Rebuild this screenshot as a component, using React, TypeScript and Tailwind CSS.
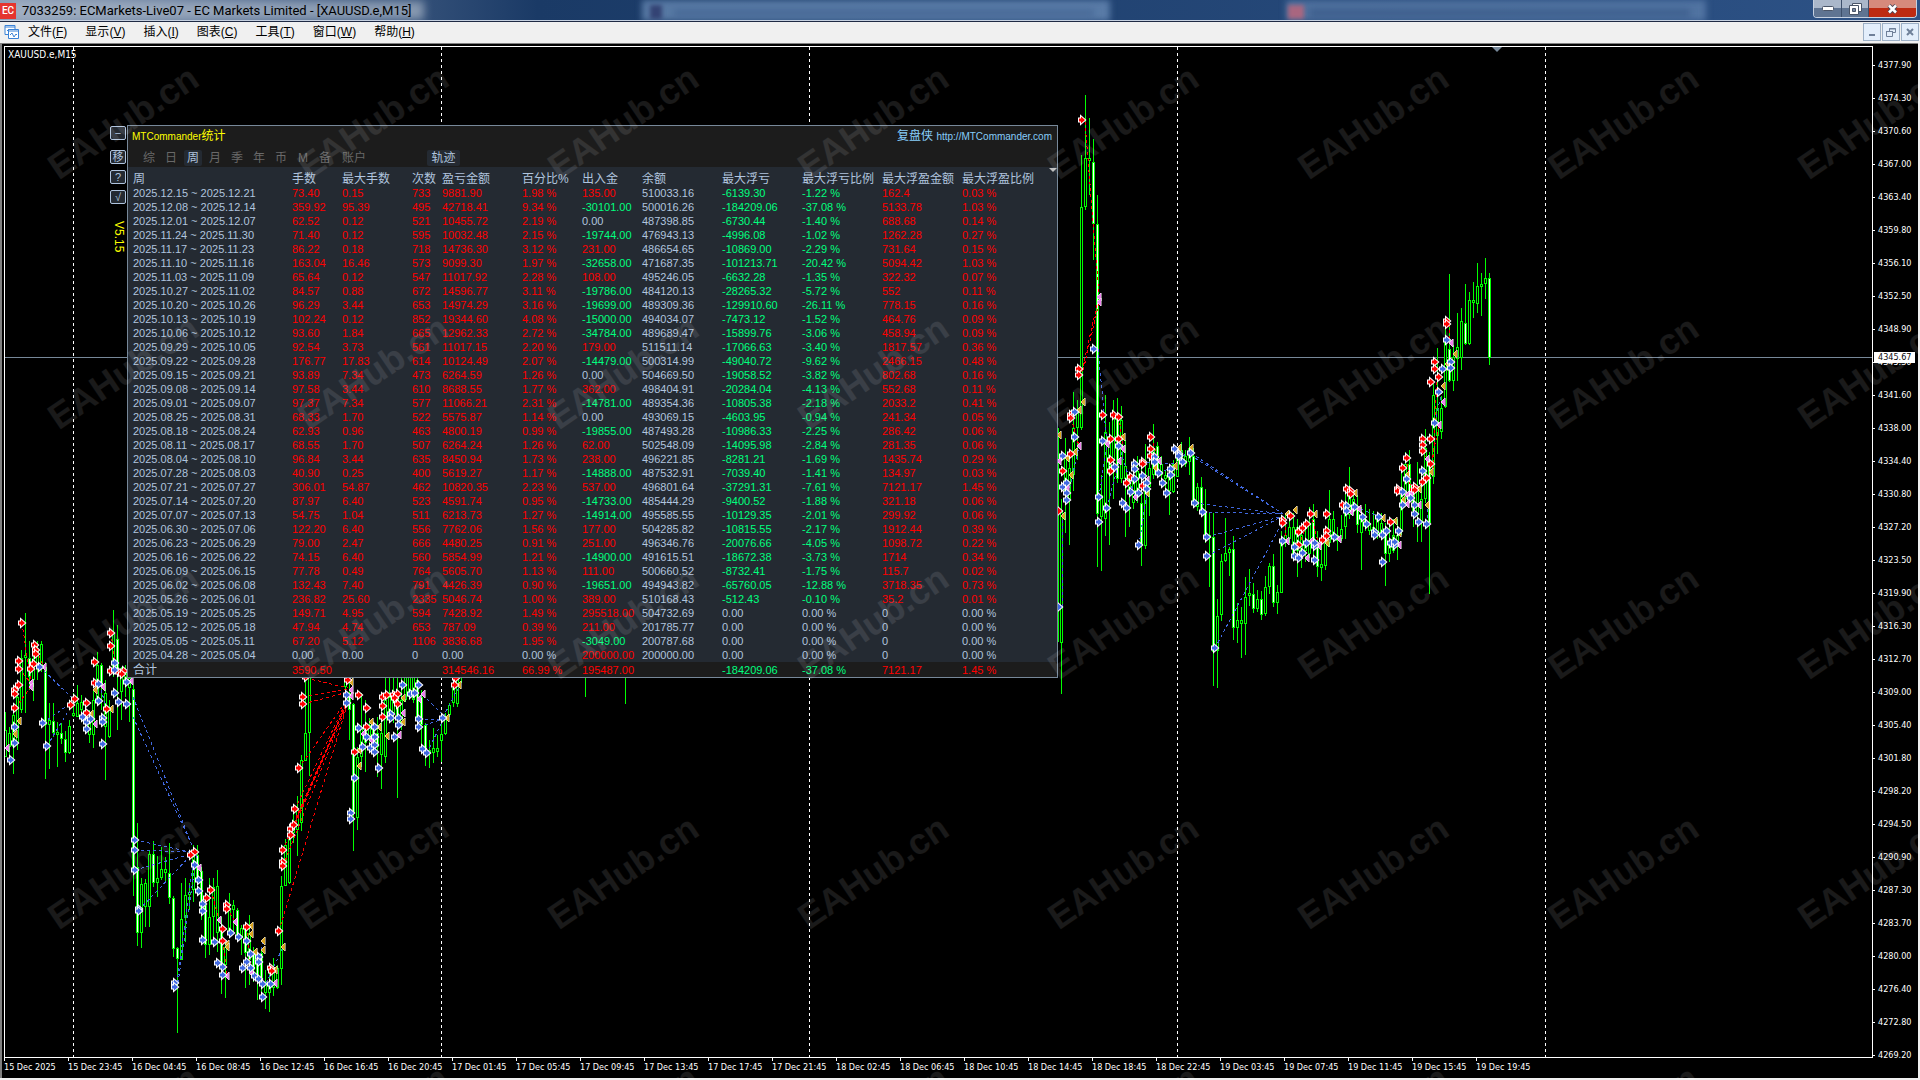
import { useState } from "react";
import clsx from "clsx";

// bar: [high, bodyTop, bodyBottom, low, 1 when the close is below the open]
type Bar = number[];
type Point = [number, number];
type MarkerKind = "buy" | "sell" | "closeBuy" | "closeSell";

interface Session {
  originX: number;
  originY: number;
  scaleY: number;
  firstBar: number;
  bars: Bar[];
  markers: Record<MarkerKind, Point[]>;
  buyTrails: number[][];
  sellTrails: number[][];
}

const BAR_STEP = 4;

const early: Session = {
  originX: 0,
  originY: 600,
  scaleY: 3,
  firstBar: 5,
  bars: [
    [335, 390, 470, 470], [380, 400, 440, 470], [340, 345, 440, 523], [250, 290, 430, 450], [150, 175, 330, 340],
    [40, 165, 175, 340], [123, 175, 230, 270, 1], [130, 180, 240, 302], [123, 150, 200, 240], [123, 133, 205, 215],
    [185, 200, 375, 537, 1], [308, 360, 375, 507], [309, 362, 398, 410, 1], [365, 397, 400, 500], [370, 400, 417, 432, 1],
    [393, 418, 460, 486, 1], [360, 378, 460, 461], [280, 340, 348, 350], [255, 310, 350, 352], [285, 305, 330, 345],
    [300, 330, 370, 400], [330, 350, 405, 430], [270, 300, 405, 443], [155, 195, 300, 310], [190, 196, 260, 330, 1],
    [240, 280, 380, 540], [300, 330, 410, 415], [30, 100, 200, 230], [75, 118, 215, 390, 1], [200, 220, 275, 360],
    [195, 210, 240, 290], [215, 235, 265, 365], [255, 268, 810, 888, 1], [668, 800, 1000, 1038, 1], [835, 852, 1000, 1043],
    [838, 848, 920, 980], [750, 762, 920, 980], [722, 762, 850, 860, 1], [767, 835, 850, 890], [740, 808, 835, 840],
    [770, 808, 818, 850], [728, 818, 895, 912, 1], [887, 895, 1048, 1070, 1], [1040, 1045, 1078, 1299, 1], [850, 958, 1080, 1080],
    [835, 885, 955, 1025], [850, 875, 885, 930], [735, 765, 870, 905], [735, 765, 840, 880, 1], [800, 812, 940, 960, 1],
    [900, 915, 1035, 1075, 1], [835, 950, 1035, 1065], [835, 860, 950, 1010], [810, 858, 1000, 1055], [950, 980, 1095, 1183, 1],
    [1020, 1040, 1095, 1193], [880, 930, 1000, 1010], [900, 915, 930, 1000], [925, 930, 1010, 1020, 1], [975, 985, 1015, 1065],
    [970, 985, 1060, 1165, 1], [945, 1000, 1080, 1155], [1040, 1060, 1110, 1145, 1], [1060, 1080, 1125, 1200, 1], [1040, 1060, 1140, 1200, 1],
    [1110, 1150, 1178, 1227], [1120, 1150, 1178, 1236], [1075, 1100, 1165, 1187], [1095, 1105, 1165, 1168], [827, 857, 1108, 1155],
    [717, 735, 857, 857], [680, 700, 850, 853], [640, 665, 700, 730], [587, 630, 690, 768], [465, 480, 670, 692],
    [200, 400, 483, 483], [150, 200, 400, 527], [100, 120, 200, 220], [60, 80, 150, 200], [60, 90, 140, 200],
    [60, 90, 140, 200], [60, 90, 140, 200], [60, 90, 140, 200], [60, 90, 140, 200], [60, 90, 140, 210],
    [180, 200, 260, 270], [240, 280, 330, 420, 1], [310, 312, 640, 752, 1], [440, 470, 655, 690], [280, 380, 470, 500],
    [300, 385, 430, 515], [355, 375, 410, 460], [370, 385, 430, 470], [350, 400, 440, 530, 1], [330, 400, 465, 567],
    [200, 300, 470, 488], [200, 290, 350, 360], [180, 280, 340, 370], [180, 290, 360, 595, 1], [200, 300, 370, 390],
    [180, 232, 300, 305], [180, 200, 290, 300], [200, 232, 300, 310], [220, 240, 360, 360, 1], [270, 290, 375, 460, 1],
    [370, 375, 450, 497, 1], [420, 450, 462, 503], [385, 445, 458, 490], [405, 445, 457, 470], [370, 403, 422, 485],
    [340, 350, 403, 405], [310, 315, 345, 350], [260, 265, 310, 320], [180, 225, 312, 320], [150, 170, 225, 250],
  ],
  markers: {
    buy: [
      [45, 382], [45, 430], [33, 481], [120, 202], [129, 370], [141, 438], [248, 352], [260, 365], [272, 358], [260, 388],
      [296, 303], [298, 253], [308, 355], [308, 365], [308, 433], [344, 188], [344, 211], [344, 280], [356, 305], [380, 246],
      [380, 313], [404, 720], [404, 751], [404, 811], [416, 928], [418, 934], [524, 1150], [526, 1160], [585, 796], [597, 841],
      [597, 873], [608, 913], [608, 933], [608, 1021], [645, 1027], [693, 999], [717, 1012], [741, 1022], [655, 1089], [669, 1102],
      [669, 1126], [729, 1105], [740, 1085], [752, 1105], [752, 1063], [777, 1070], [777, 1087], [765, 1128], [777, 1138],
      [789, 1153], [813, 1153], [789, 1192], [1042, 286], [1042, 310], [1053, 640], [1053, 657], [1065, 535], [1077, 383],
      [1125, 380], [1101, 411], [1125, 411], [1089, 440], [1113, 444], [1125, 434], [1125, 455], [1137, 505], [1173, 342],
      [1173, 355], [1197, 355], [1197, 374], [1185, 410], [1209, 256], [1233, 282], [1245, 280], [1257, 256], [1257, 357],
      [1257, 380], [1268, 448], [1280, 460], [1328, 355],
    ],
    sell: [
      [67, 70], [105, 135], [107, 150], [109, 163], [56, 184], [56, 208], [103, 192], [92, 208], [56, 256], [45, 270],
      [45, 282], [45, 325], [285, 187], [285, 248], [332, 98], [334, 138], [332, 212], [358, 216], [372, 212], [366, 222],
      [225, 296], [213, 315], [260, 310], [260, 340], [320, 327], [908, 290], [908, 313], [918, 232], [1045, 240], [896, 505],
      [884, 628], [872, 686], [882, 674], [872, 704], [848, 751], [848, 787], [848, 797], [836, 994], [585, 757], [573, 766],
      [633, 871], [621, 895], [681, 915], [681, 928], [669, 987], [669, 1023], [741, 981], [813, 1104], [815, 1112],
      [1076, 286], [1101, 325], [1065, 457], [1101, 381], [1149, 292], [1160, 284], [1183, 284], [1195, 282], [1185, 294],
      [1149, 319], [1195, 313], [1149, 351], [1367, 235], [1365, 256],
    ],
    closeBuy: [
      [57, 362], [45, 403], [285, 271], [272, 342], [333, 326], [680, 1032], [680, 1042], [753, 978], [753, 1003], [765, 1057],
      [789, 1023], [789, 1050], [825, 1110], [850, 1040], [1052, 247], [1077, 498], [1077, 450], [1113, 365], [1137, 380],
      [1160, 408], [1209, 294], [1209, 365], [1342, 355], [1378, 256],
    ],
    closeSell: [
      [93, 250], [93, 262], [22, 445], [131, 201], [309, 262], [285, 373], [394, 243], [597, 804], [657, 959], [706, 967],
      [682, 1127], [753, 1118], [825, 1150], [1052, 270], [1052, 288], [1089, 403], [1113, 420], [1209, 340], [1197, 404],
      [1268, 282], [1257, 298],
    ],
  },
  buyTrails: [
    [120, 202, 213, 290], [129, 370, 213, 310], [141, 438, 225, 300], [400, 290, 580, 745], [400, 350, 585, 757],
    [404, 720, 573, 757], [404, 751, 573, 757], [404, 811, 573, 762], [418, 930, 573, 766], [530, 1150, 580, 790],
    [535, 1150, 590, 757], [1268, 285, 1328, 345], [1257, 357, 1328, 357], [1257, 380, 1328, 357], [1280, 460, 1328, 360],
    [797, 1150, 850, 1040], [1330, 350, 1380, 256], [777, 1087, 789, 1023], [298, 253, 320, 327],
  ],
  sellTrails: [
    [908, 290, 1045, 268], [918, 235, 1045, 265], [908, 313, 1045, 275], [896, 505, 1040, 300], [884, 628, 1040, 300],
    [872, 686, 1040, 305], [882, 674, 1040, 305], [872, 704, 1040, 310], [848, 751, 1040, 310], [848, 797, 1040, 315],
    [836, 994, 1045, 305], [45, 325, 93, 262], [67, 70, 92, 250], [681, 925, 706, 967], [633, 871, 657, 959],
    [669, 1023, 682, 1126], [56, 208, 93, 250], [107, 150, 131, 200], [332, 98, 345, 188], [741, 981, 753, 1118],
  ],
};

const late: Session = {
  originX: 1040,
  originY: 80,
  scaleY: 2.529,
  firstBar: 1057,
  bars: [
    [870, 880, 1422, 1422], [1060, 1090, 1425, 1552], [905, 950, 1050, 1145], [950, 980, 1060, 1175], [790, 880, 1000, 1040],
    [810, 840, 880, 960], [190, 320, 880, 885], [38, 198, 322, 328], [96, 198, 206, 290], [148, 208, 365, 455, 1],
    [290, 365, 1097, 1232, 1], [1000, 1050, 1105, 1242], [797, 890, 1110, 1152], [865, 900, 1000, 1175], [810, 850, 960, 1060],
    [803, 850, 1010, 1020, 1], [825, 860, 1010, 1020], [910, 975, 1010, 1157], [1000, 1010, 1040, 1130], [960, 1000, 1070, 1085],
    [950, 990, 1050, 1070], [960, 1070, 1175, 1228, 1], [920, 1030, 1178, 1185], [930, 980, 1030, 1103], [870, 930, 1000, 1010],
    [915, 925, 985, 1000, 1], [950, 970, 1000, 1010], [990, 1000, 1010, 1040], [980, 1000, 1040, 1100], [960, 970, 1042, 1045],
    [930, 950, 1003, 1005], [915, 935, 965, 980], [935, 950, 970, 978], [903, 930, 965, 1000], [930, 950, 1070, 1080, 1],
    [1018, 1030, 1080, 1090], [1004, 1030, 1095, 1100, 1], [1035, 1090, 1155, 1170, 1], [1095, 1150, 1158, 1282], [1095, 1155, 1447, 1532, 1],
    [1313, 1355, 1445, 1537], [1200, 1217, 1353, 1368], [1108, 1195, 1217, 1218], [1180, 1187, 1195, 1255], [1153, 1187, 1387, 1415, 1],
    [1323, 1365, 1387, 1423], [1333, 1365, 1377, 1463], [1257, 1308, 1375, 1453], [1237, 1298, 1303, 1330], [1272, 1300, 1337, 1347, 1],
    [1290, 1313, 1337, 1345], [1293, 1313, 1352, 1365, 1], [1255, 1282, 1350, 1355], [1222, 1230, 1283, 1300], [1200, 1230, 1322, 1333, 1],
    [1277, 1295, 1323, 1350], [1140, 1165, 1297, 1297], [1100, 1150, 1170, 1180], [1110, 1130, 1160, 1170], [1095, 1130, 1200, 1210],
    [1110, 1130, 1190, 1257], [1120, 1150, 1200, 1235], [1115, 1170, 1190, 1220], [1080, 1120, 1200, 1210], [1072, 1110, 1180, 1220, 1],
    [1140, 1170, 1232, 1257, 1], [1170, 1225, 1235, 1267], [1150, 1170, 1230, 1240], [1037, 1110, 1170, 1180], [1090, 1110, 1150, 1160],
    [1130, 1150, 1165, 1190], [1100, 1135, 1160, 1165], [1040, 1070, 1130, 1160], [978, 1050, 1100, 1110], [1040, 1060, 1085, 1100],
    [1050, 1080, 1125, 1145, 1], [1080, 1105, 1145, 1238], [1072, 1110, 1130, 1140], [1085, 1120, 1140, 1150], [1090, 1130, 1150, 1155],
    [1095, 1110, 1150, 1160], [1095, 1120, 1150, 1155], [1120, 1140, 1200, 1280, 1], [1120, 1170, 1200, 1220], [1110, 1150, 1190, 1195],
    [1110, 1150, 1180, 1215], [990, 1050, 1140, 1150], [940, 970, 1060, 1070], [935, 970, 1050, 1060, 1], [1020, 1040, 1090, 1130],
    [965, 1030, 1100, 1168], [1000, 1060, 1120, 1168], [883, 930, 1060, 1070], [940, 960, 1120, 1300, 1], [770, 797, 1005, 1022],
    [678, 830, 900, 945], [800, 830, 890, 907], [600, 660, 828, 830], [490, 680, 762, 765, 1], [670, 700, 760, 787],
    [590, 675, 705, 760], [577, 610, 703, 733], [517, 615, 668, 670, 1], [535, 557, 667, 670], [512, 557, 565, 603],
    [463, 522, 567, 590], [487, 517, 523, 597], [450, 502, 517, 555], [487, 502, 702, 722, 1],
  ],
  markers: {
    buy: [
      [163, 680], [104, 840], [104, 902], [68, 950], [70, 1030], [80, 1018], [80, 1045], [80, 1063], [58, 1333], [188, 912],
      [176, 1055], [176, 1117], [200, 1083], [236, 925], [224, 978], [248, 1070], [260, 1083], [272, 1042], [284, 972],
      [284, 985], [284, 1010], [296, 1045], [308, 1002], [320, 1018], [320, 1034], [296, 1175], [344, 953], [344, 967],
      [356, 993], [368, 1018], [380, 1045], [392, 983], [392, 1000], [404, 932], [416, 945], [416, 952], [428, 967],
      [452, 944], [464, 1071], [488, 1093], [500, 1156], [500, 1205], [524, 1436], [728, 1167], [764, 1182], [764, 1205],
      [776, 1210], [788, 1196], [800, 1171], [824, 1178], [824, 1213], [824, 1170], [884, 1155], [920, 1078], [920, 1090],
      [944, 1080], [968, 1106], [980, 1124], [1004, 1142], [1004, 1150], [1016, 1104], [1028, 1150], [1040, 1141],
      [1028, 1220], [1052, 1170], [1064, 1175], [1064, 1168], [1076, 1141], [1088, 1043], [1088, 1075], [1100, 1008],
      [1112, 1058], [1124, 1075], [1124, 1098], [1136, 1117], [1160, 1124], [1148, 990], [1184, 868], [1196, 790],
      [1208, 732], [1232, 714], [1232, 728], [1220, 657],
    ],
    sell: [
      [127, 100], [116, 732], [116, 746], [92, 848], [92, 855], [92, 946], [68, 988], [58, 1090], [188, 848], [223, 848],
      [236, 853], [212, 907], [236, 908], [212, 960], [212, 988], [260, 1020], [272, 1003], [308, 965], [308, 970],
      [308, 1027], [332, 904], [332, 932], [332, 950], [728, 1113], [728, 1120], [752, 1103], [776, 1143], [788, 1132],
      [800, 1124], [776, 1177], [814, 1098], [850, 1163], [860, 1140], [860, 1098], [860, 1153], [908, 1075], [920, 1035],
      [932, 1040], [932, 1048], [1052, 1118], [1075, 1035], [1075, 1040], [1088, 980], [1100, 957], [1124, 1030],
      [1124, 1038], [1148, 908], [1148, 922], [1148, 937], [1172, 908], [1172, 972], [1148, 1017], [1160, 1006],
      [1172, 765], [1184, 714], [1184, 732], [1196, 752], [1220, 610], [1220, 618],
    ],
    closeBuy: [
      [58, 897], [68, 1103], [82, 957], [93, 1000], [106, 940], [118, 835], [130, 815], [250, 902], [322, 1045], [344, 982],
      [406, 975], [418, 930], [454, 930], [766, 1088], [742, 1097], [826, 1097], [862, 1170], [946, 1045], [1030, 1107],
      [1066, 1115], [1078, 1145], [1088, 1062], [1102, 998], [1138, 1035], [1160, 1075], [1174, 992], [1210, 775],
      [1222, 717], [1245, 692],
    ],
    closeSell: [
      [58, 963], [118, 925], [80, 1032], [178, 550], [178, 562], [200, 920], [250, 932], [236, 963], [286, 1055],
      [356, 963], [320, 1012], [740, 1167], [800, 1208], [814, 1165], [838, 1178], [898, 1160], [932, 1093], [956, 1085],
      [1076, 1175], [1100, 1050], [1112, 1045], [1136, 1074], [1100, 1073], [1160, 958], [1198, 872], [1210, 815], [1234, 665],
    ],
  },
  buyTrails: [
    [452, 944, 728, 1098], [464, 955, 728, 1098], [464, 1071, 728, 1097], [488, 1093, 728, 1098], [500, 1156, 728, 1102],
    [500, 1205, 728, 1102], [524, 1436, 728, 1115], [173, 680, 200, 920], [176, 1055, 200, 920], [200, 1083, 236, 963],
    [236, 925, 286, 1055], [320, 967, 404, 970], [66, 1333, 66, 1100], [356, 993, 404, 975], [944, 1080, 1030, 1107],
    [80, 1063, 118, 925], [296, 1175, 322, 1045], [1160, 1124, 1160, 1075], [1184, 868, 1210, 775], [392, 983, 454, 930],
  ],
  sellTrails: [
    [136, 105, 176, 545], [176, 565, 130, 735], [172, 570, 122, 746], [1172, 972, 1198, 872], [1180, 985, 1190, 752],
    [1228, 618, 1228, 665], [236, 853, 250, 932], [92, 855, 118, 925], [1148, 937, 1160, 958], [212, 988, 236, 963],
    [736, 1115, 736, 1167], [814, 1098, 838, 1178], [332, 904, 356, 963], [1100, 957, 1112, 1045], [776, 1177, 800, 1124],
  ],
};

const separators = [73, 441, 809, 1177, 1545];

const prices = [
  "4377.90", "4374.30", "4370.60", "4367.00", "4363.40", "4359.80", "4356.10", "4352.50", "4348.90", "4345.30", "4341.60",
  "4338.00", "4334.40", "4330.80", "4327.20", "4323.50", "4319.90", "4316.30", "4312.70", "4309.00", "4305.40", "4301.80",
  "4298.20", "4294.50", "4290.90", "4287.30", "4283.70", "4280.00", "4276.40", "4272.80", "4269.20",
];

const times = [
  "15 Dec 2025", "15 Dec 23:45", "16 Dec 04:45", "16 Dec 08:45", "16 Dec 12:45", "16 Dec 16:45", "16 Dec 20:45", "17 Dec 01:45",
  "17 Dec 05:45", "17 Dec 09:45", "17 Dec 13:45", "17 Dec 17:45", "17 Dec 21:45", "18 Dec 02:45", "18 Dec 06:45", "18 Dec 10:45",
  "18 Dec 14:45", "18 Dec 18:45", "18 Dec 22:45", "19 Dec 03:45", "19 Dec 07:45", "19 Dec 11:45", "19 Dec 15:45", "19 Dec 19:45",
];

const menus = [
  ["文件", "F"], ["显示", "V"], ["插入", "I"], ["图表", "C"], ["工具", "T"], ["窗口", "W"], ["帮助", "H"],
];

const columns = [
  { name: "周", width: "w-[164px]" },
  { name: "手数", width: "w-[50px]" },
  { name: "最大手数", width: "w-[70px]" },
  { name: "次数", width: "w-[30px]" },
  { name: "盈亏金额", width: "w-[80px]" },
  { name: "百分比%", width: "w-[60px]" },
  { name: "出入金", width: "w-[60px]" },
  { name: "余额", width: "w-[80px]" },
  { name: "最大浮亏", width: "w-[80px]" },
  { name: "最大浮亏比例", width: "w-[80px]" },
  { name: "最大浮盈金额", width: "w-[80px]" },
  { name: "最大浮盈比例", width: "w-[95px]" },
];

// week | lots | max lots | count | profit | % | deposit | balance | max loss | loss % | max gain | gain %
const weeks = `2025.12.15 ~ 2025.12.21|73.40|0.15|733|9881.90|1.98 %|135.00|510033.16|-6139.30|-1.22 %|162.4|0.03 %
2025.12.08 ~ 2025.12.14|359.92|95.39|495|42718.41|9.34 %|-30101.00|500016.26|-184209.06|-37.08 %|5133.78|1.03 %
2025.12.01 ~ 2025.12.07|62.52|0.12|521|10455.72|2.19 %|0.00|487398.85|-6730.44|-1.40 %|688.68|0.14 %
2025.11.24 ~ 2025.11.30|71.40|0.12|595|10032.48|2.15 %|-19744.00|476943.13|-4996.08|-1.02 %|1262.28|0.27 %
2025.11.17 ~ 2025.11.23|86.22|0.18|718|14736.30|3.12 %|231.00|486654.65|-10869.00|-2.29 %|731.64|0.15 %
2025.11.10 ~ 2025.11.16|163.04|16.46|573|9099.30|1.97 %|-32658.00|471687.35|-101213.71|-20.42 %|5094.42|1.03 %
2025.11.03 ~ 2025.11.09|65.64|0.12|547|11017.92|2.28 %|108.00|495246.05|-6632.28|-1.35 %|322.32|0.07 %
2025.10.27 ~ 2025.11.02|84.57|0.88|672|14596.77|3.11 %|-19786.00|484120.13|-28265.32|-5.72 %|552|0.11 %
2025.10.20 ~ 2025.10.26|96.29|3.44|653|14974.29|3.16 %|-19699.00|489309.36|-129910.60|-26.11 %|778.15|0.16 %
2025.10.13 ~ 2025.10.19|102.24|0.12|852|19344.60|4.08 %|-15000.00|494034.07|-7473.12|-1.52 %|464.76|0.09 %
2025.10.06 ~ 2025.10.12|93.60|1.84|665|12962.33|2.72 %|-34784.00|489689.47|-15899.76|-3.06 %|458.94|0.09 %
2025.09.29 ~ 2025.10.05|92.54|3.73|561|11017.15|2.20 %|179.00|511511.14|-17066.63|-3.40 %|1817.57|0.36 %
2025.09.22 ~ 2025.09.28|176.77|17.83|614|10124.49|2.07 %|-14479.00|500314.99|-49040.72|-9.62 %|2466.15|0.48 %
2025.09.15 ~ 2025.09.21|93.89|7.34|473|6264.59|1.26 %|0.00|504669.50|-19058.52|-3.82 %|802.68|0.16 %
2025.09.08 ~ 2025.09.14|97.58|3.44|610|8688.55|1.77 %|362.00|498404.91|-20284.04|-4.13 %|552.68|0.11 %
2025.09.01 ~ 2025.09.07|97.37|7.34|577|11066.21|2.31 %|-14781.00|489354.36|-10805.38|-2.18 %|2033.2|0.41 %
2025.08.25 ~ 2025.08.31|68.33|1.70|522|5575.87|1.14 %|0.00|493069.15|-4603.95|-0.94 %|241.34|0.05 %
2025.08.18 ~ 2025.08.24|62.93|0.96|463|4800.19|0.99 %|-19855.00|487493.28|-10986.33|-2.25 %|286.42|0.06 %
2025.08.11 ~ 2025.08.17|68.55|1.70|507|6264.24|1.26 %|62.00|502548.09|-14095.98|-2.84 %|281.35|0.06 %
2025.08.04 ~ 2025.08.10|96.84|3.44|635|8450.94|1.73 %|238.00|496221.85|-8281.21|-1.69 %|1435.74|0.29 %
2025.07.28 ~ 2025.08.03|40.90|0.25|400|5619.27|1.17 %|-14888.00|487532.91|-7039.40|-1.41 %|134.97|0.03 %
2025.07.21 ~ 2025.07.27|306.01|54.87|462|10820.35|2.23 %|537.00|496801.64|-37291.31|-7.61 %|7121.17|1.45 %
2025.07.14 ~ 2025.07.20|87.97|6.40|523|4591.74|0.95 %|-14733.00|485444.29|-9400.52|-1.88 %|321.18|0.06 %
2025.07.07 ~ 2025.07.13|54.75|1.04|511|6213.73|1.27 %|-14914.00|495585.55|-10129.35|-2.01 %|299.92|0.06 %
2025.06.30 ~ 2025.07.06|122.20|6.40|556|7762.06|1.56 %|177.00|504285.82|-10815.55|-2.17 %|1912.44|0.39 %
2025.06.23 ~ 2025.06.29|79.00|2.47|666|4480.25|0.91 %|251.00|496346.76|-20076.66|-4.05 %|1098.72|0.22 %
2025.06.16 ~ 2025.06.22|74.15|6.40|560|5854.99|1.21 %|-14900.00|491615.51|-18672.38|-3.73 %|1714|0.34 %
2025.06.09 ~ 2025.06.15|77.78|0.49|764|5605.70|1.13 %|111.00|500660.52|-8732.41|-1.75 %|115.7|0.02 %
2025.06.02 ~ 2025.06.08|132.43|7.40|791|4426.39|0.90 %|-19651.00|494943.82|-65760.05|-12.88 %|3718.35|0.73 %
2025.05.26 ~ 2025.06.01|236.82|25.60|2335|5046.74|1.00 %|389.00|510168.43|-512.43|-0.10 %|35.2|0.01 %
2025.05.19 ~ 2025.05.25|149.71|4.95|594|7428.92|1.49 %|295518.00|504732.69|0.00|0.00 %|0|0.00 %
2025.05.12 ~ 2025.05.18|47.94|4.74|653|787.09|0.39 %|211.00|201785.77|0.00|0.00 %|0|0.00 %
2025.05.05 ~ 2025.05.11|67.20|5.12|1106|3836.68|1.95 %|-3049.00|200787.68|0.00|0.00 %|0|0.00 %
2025.04.28 ~ 2025.05.04|0.00|0.00|0|0.00|0.00 %|200000.00|200000.00|0.00|0.00 %|0|0.00 %`
  .split("\n")
  .map((line) => line.split("|"));

const totals = ["合计", "3590.50", "", "", "314546.16", "66.99 %", "195487.00", "", "-184209.06", "-37.08 %", "7121.17", "1.45 %"];

const tabs = ["综", "日", "周", "月", "季", "年", "币", "M", "备"];

function toneOf(value: string, column: number) {
  if (column === 0 || column === 7) return "text-[#b0c4de]";
  const n = parseFloat(value);
  if (n > 0) return "text-[#ff0000]";
  if (n < 0) return "text-[#00ff7f]";
  return "text-[#b0c4de]";
}

const markerFill: Record<MarkerKind, string> = {
  buy: "#4169e1",
  sell: "#ff0000",
  closeBuy: "#daa520",
  closeSell: "#ee82ee",
};

function Marker({ kind, x, y }: { kind: MarkerKind; x: number; y: number }) {
  const isEntry = kind === "buy" || kind === "sell";
  return (
    <path
      transform={`translate(${x} ${y})`}
      d={isEntry ? "M-3-1.500H-1V-3.500L3 0L-1 3.500V1.500H-3Z" : "M-2 0L2-4V4Z"}
      fill={markerFill[kind]}
      stroke="#fff"
      strokeWidth={isEntry ? 2 : 1}
      paintOrder="stroke"
    />
  );
}

function SessionLayer({ session }: { session: Session }) {
  const px = (v: number) => Math.round(session.originX + v / 3);
  const py = (v: number) => Math.round(session.originY + v / session.scaleY);
  const kinds: MarkerKind[] = ["closeSell", "closeBuy", "sell", "buy"];

  return (
    <g>
      {session.bars.map(([high, top, bottom, low, bear], i) => {
        const x = session.firstBar + i * BAR_STEP;
        const bodyHeight = Math.max(py(bottom) - py(top), 3);
        return (
          <g key={i} shapeRendering="crispEdges">
            <rect x={x} y={py(high)} width={1} height={py(low) - py(high)} fill="#00ff00" />
            <rect x={x - 1} y={py(top)} width={3} height={bodyHeight} fill="#00ff00" />
            <rect x={x} y={py(top) + 1} width={1} height={bodyHeight - 2} fill={bear ? "#ffffff" : "#000000"} />
          </g>
        );
      })}
      <g strokeDasharray="3 3" fill="none" shapeRendering="crispEdges">
        {session.buyTrails.map(([x1, y1, x2, y2], i) => (
          <line key={i} x1={px(x1)} y1={py(y1)} x2={px(x2)} y2={py(y2)} stroke="#4169e1" />
        ))}
        {session.sellTrails.map(([x1, y1, x2, y2], i) => (
          <line key={i} x1={px(x1)} y1={py(y1)} x2={px(x2)} y2={py(y2)} stroke="#ff0000" />
        ))}
      </g>
      {kinds.map((kind) =>
        session.markers[kind].map(([x, y], i) => <Marker key={kind + i} kind={kind} x={px(x)} y={py(y)} />)
      )}
    </g>
  );
}

function Chart() {
  return (
    <svg className="absolute inset-0 h-full w-full">
      <g transform="translate(-5 -47)">
        {separators.map((x) => (
          <line key={x} x1={x + 0.5} x2={x + 0.5} y1={47} y2="200%" stroke="#fff" strokeDasharray="3 3" />
        ))}
        <line x1={0} x2="200%" y1={357.5} y2={357.5} stroke="#778899" />
        <SessionLayer session={early} />
        <rect x={585} y={600} width={1} height={97} fill="#00ff00" />
        <rect x={625} y={600} width={1} height={104} fill="#00ff00" />
        <SessionLayer session={late} />
        <path d="M1492 47h10l-5 5z" fill="#778899" />
      </g>
    </svg>
  );
}

function Watermarks() {
  const xs = [123, 373, 623, 873, 1123, 1373, 1623, 1873];
  const ys = [122, 372, 622, 872, 1122];
  return (
    <svg className="pointer-events-none absolute inset-0 h-full w-full" aria-hidden="true">
      {ys.map((y) =>
        xs.map((x) => (
          <text
            key={`${x}-${y}`}
            transform={`translate(${x} ${y}) rotate(-34)`}
            textAnchor="middle"
            dominantBaseline="central"
            className="fill-white/10 font-['Liberation_Sans',sans-serif] text-[36px] font-bold"
          >
            EAHub.cn
          </text>
        ))
      )}
    </svg>
  );
}

function StatsPanel() {
  const [tab, setTab] = useState("周");
  const sideButtons = [
    { text: "−", gap: "mb-[10px]" },
    { text: "移", gap: "mb-1.5" },
    { text: "?", gap: "mb-1.5" },
    { text: "√", gap: "mb-[17px]" },
  ];

  return (
    <section className="absolute left-[105px] top-[78px] flex gap-px">
      <div className="flex w-[16px] flex-col items-end pt-px">
        {sideButtons.map((b) => (
          <button
            key={b.text}
            className={clsx(
              "flex h-[14px] w-[16px] items-center justify-center rounded-xs border border-[#b0c4de] bg-[#242a32] text-[11px] leading-none text-[#b0c4de]",
              b.gap
            )}
          >
            {b.text}
          </button>
        ))}
        <span className="text-[12px] leading-[14px] text-[#ffff00] [writing-mode:vertical-rl]">V5.15</span>
      </div>

      <div className="relative w-[931px] border border-[#778899] bg-[#1c1c1c]">
        <header className="flex h-[24px] items-center justify-between pb-[5px] pl-1 pr-[5px]">
          <h1 className="text-[12px] leading-none text-[#ffff00]">
            <span className="text-[10px]">MTCommander</span>统计
          </h1>
          <a href="http://MTCommander.com" className="text-[12px] leading-none text-[#87cefa]">
            复盘侠 <span className="text-[10px]">http://MTCommander.com</span>
          </a>
        </header>
        <nav className="flex h-[17px] gap-1 pl-[12px] text-[12px] leading-[16px]">
          {tabs.map((t) => (
            <button
              key={t}
              onClick={() => setTab(t)}
              className={clsx(
                "h-[16px] w-[18px] rounded-xs text-center",
                t === tab ? "bg-[#242a32] text-[#b0c4de]" : "text-[#696969]"
              )}
            >
              {t}
            </button>
          ))}
          <button className="h-[16px] w-[32px] text-[#696969]">账户</button>
          <button className="ml-[53px] h-[16px] w-[33px] rounded-xs bg-[#242a32] text-[#b0c4de]">轨迹</button>
        </nav>

        <table className="w-full table-fixed border-collapse whitespace-nowrap bg-[#242a32] text-left text-[11px] leading-[14px]">
          <thead>
            <tr className="h-[19px] text-[12px] text-[#b0c4de]">
              {columns.map((c, i) => (
                <th key={c.name} className={clsx("p-0 pt-1 font-normal", c.width, i === 0 && "pl-[5px]")}>
                  {c.name}
                </th>
              ))}
            </tr>
          </thead>
          <tbody>
            {weeks.map((row) => (
              <tr key={row[0]} className="h-[14px]">
                {row.map((value, i) => (
                  <td key={i} className={clsx("p-0", i === 0 && "pl-[5px]", toneOf(value, i))}>
                    {value}
                  </td>
                ))}
              </tr>
            ))}
          </tbody>
          <tfoot>
            <tr className="bg-[#1c1c1c]">
              {totals.map((value, i) => (
                <td key={i} className={clsx("p-0 pt-px", i === 0 && "pl-[5px] text-[12px]", toneOf(value, i))}>
                  {value}
                </td>
              ))}
            </tr>
          </tfoot>
        </table>
        <svg className="absolute right-0 top-[42px] h-[4px] w-[8px]" viewBox="0 0 8 4">
          <path d="M0 0h8l-4 4z" fill="#c0c0c0" />
        </svg>
      </div>
    </section>
  );
}

function TitleBar() {
  return (
    <div className="relative flex h-[22px] shrink-0 items-start justify-between overflow-hidden border-b border-[#1f2a44] bg-linear-to-r from-[#8fa0b8] via-[#1a3a66] via-[28%] to-[#2d5286]">
      <div className="absolute left-[642px] top-0 h-full w-[468px] bg-[#7193bd]/70 blur-[3px]" />
      <div className="absolute left-[1286px] top-0 h-full w-[420px] bg-[#6a8cb8]/60 blur-[3px]" />
      <div className="absolute left-[1288px] top-[5px] h-[14px] w-[16px] bg-[#c06478]/80 blur-[2px]" />
      <div className="absolute left-[650px] top-[5px] h-[14px] w-[12px] bg-[#2a3668]/80 blur-[2px]" />
      <div className="absolute left-[674px] top-[9px] h-[8px] w-[420px] bg-[#40618f]/60 blur-[3px]" />
      <div className="absolute left-[1310px] top-[9px] h-[8px] w-[380px] bg-[#2d4d7d]/50 blur-[3px]" />
      <div className="absolute left-[12px] top-px h-[19px] w-[412px] bg-[#a9b6c8]/70 blur-[4px]" />
      <div className="absolute bottom-0 left-0 h-px w-full bg-[#c5d0e0]" />
      <div className="relative flex items-center gap-1.5 pt-[3px]">
        <span className="flex h-[16px] w-[16px] items-center justify-center bg-[#e5342e] font-['Roboto',sans-serif] text-[10px] font-medium leading-none text-white">
          EC
        </span>
        <span className="font-['Roboto',sans-serif] text-[13px] leading-[16px] text-black">
          7033259: ECMarkets-Live07 - EC Markets Limited - [XAUUSD.e,M15]
        </span>
      </div>
      <div className="relative mr-[3px] flex h-[18px] overflow-hidden rounded-b-[4px] border border-t-0 border-[#c5d0e0]">
        <button aria-label="Minimize" className="flex w-[28px] items-center justify-center border-r border-[#3d4f6b] bg-linear-to-b from-[#aab7ca] from-50% to-[#5f7492] to-50%">
          <svg width="12" height="5" viewBox="0 0 12 5"><rect x=".5" y=".5" width="11" height="4" rx="1" fill="#fff" stroke="#4a5568" /></svg>
        </button>
        <button aria-label="Restore" className="flex w-[27px] items-center justify-center border-r border-[#3d4f6b] bg-linear-to-b from-[#aab7ca] from-50% to-[#5f7492] to-50%">
          <svg width="13" height="12" viewBox="0 0 13 12" fill="#fff" stroke="#4a5568">
            <path d="M3.5.5h9v8h-9z" />
            <path d="M.5 2.5h9v9h-9z" />
            <path d="M3.5 5.5h3v3h-3z" fill="#7a8aa5" />
          </svg>
        </button>
        <button aria-label="Close" className="flex w-[47px] items-center justify-center bg-linear-to-b from-[#d68a7c] from-50% to-[#bd2a12] to-50%">
          <svg width="13" height="12" viewBox="0 0 13 12">
            <path d="M3 2.5l7 7M10 2.5l-7 7" stroke="#4a4a5a" strokeWidth="4.5" />
            <path d="M3 2.5l7 7M10 2.5l-7 7" stroke="#fff" strokeWidth="2.5" />
          </svg>
        </button>
      </div>
    </div>
  );
}

function MenuBar() {
  const childButton = "flex h-[18px] w-[18px] items-center justify-center border border-[#9db0c6] bg-[#e3eefb]";
  return (
    <div className="flex h-[21px] shrink-0 items-center justify-between bg-[#f0f0f0] pb-px pr-px">
      <div className="flex items-center">
        <svg className="ml-1 mr-2 h-[15px] w-[16px]" viewBox="0 0 16 15" fill="#fff" stroke="#3b82d6">
          <path d="M1 .5h10v9H1z" />
          <path d="M1 2h10M3 6l2-2 2 2" />
          <path d="M4.500 4.500h10v9h-10z" />
          <path d="M4.500 6h10M6 10l2-2 2 4 2-3 1 1" />
        </svg>
        <nav className="flex gap-[18px] text-[12px] leading-[18px] text-black">
          {menus.map(([name, key]) => (
            <button key={key} className="whitespace-nowrap">
              {name}(<u>{key}</u>)
            </button>
          ))}
        </nav>
      </div>
      <div className="flex gap-px">
        <button aria-label="Minimize chart" className={childButton}>
          <svg width="10" height="10"><path d="M2 7h6v2H2z" fill="#6f8099" /></svg>
        </button>
        <button aria-label="Restore chart" className={childButton}>
          <svg width="10" height="10" fill="none" stroke="#6f8099">
            <path d="M3.500 4V1.500h6v4H7M3 2h7" />
            <path d="M1 4.500h6M.5 4v5.500h6V4" />
          </svg>
        </button>
        <button aria-label="Close chart" className={childButton}>
          <svg width="10" height="10"><path d="M2 2l6 6M8 2l-6 6" stroke="#6f8099" strokeWidth="2" /></svg>
        </button>
      </div>
    </div>
  );
}

export default function App() {
  return (
    <div className="relative flex h-screen w-full flex-col overflow-hidden bg-[#f0f0f0] font-['Liberation_Sans','Noto_Sans_CJK_SC',sans-serif]">
      <TitleBar />
      <MenuBar />
      <main className="mb-0.5 mr-0.5 flex min-h-0 flex-1 flex-col border-l-2 border-t border-[#808080] bg-black pl-0.5 pt-0.5 font-['DejaVu_Sans_Condensed','Roboto',sans-serif] text-[9px] leading-none text-white">
        <div className="flex min-h-0 flex-1">
          <div className="relative min-w-0 flex-1 overflow-hidden border border-white">
            <Chart />
            <span className="relative block pl-[3px] pt-[3px] text-[10px]">XAUUSD.e,M15</span>
            <div className="font-['Liberation_Sans','Noto_Sans_CJK_SC',sans-serif]">
              <StatsPanel />
            </div>
          </div>
          <ul className="relative w-[45px] shrink-0 pt-[3px]">
            {prices.map((p) => (
              <li key={p} className="flex h-[33px] items-center gap-[3px]">
                <span className="h-px w-[2px] bg-white" />
                {p}
              </li>
            ))}
            <li className="absolute left-px top-[306px] flex h-[11px] w-[41px] items-center bg-white pl-1 text-black">4345.67</li>
          </ul>
        </div>
        <ul className="flex h-[20px] shrink-0">
          {times.map((t) => (
            <li key={t} className="w-[64px] shrink-0 whitespace-nowrap">
              <span className="mb-0.5 block h-[3px] w-px bg-white" />
              {t}
            </li>
          ))}
        </ul>
      </main>
      <Watermarks />
    </div>
  );
}
